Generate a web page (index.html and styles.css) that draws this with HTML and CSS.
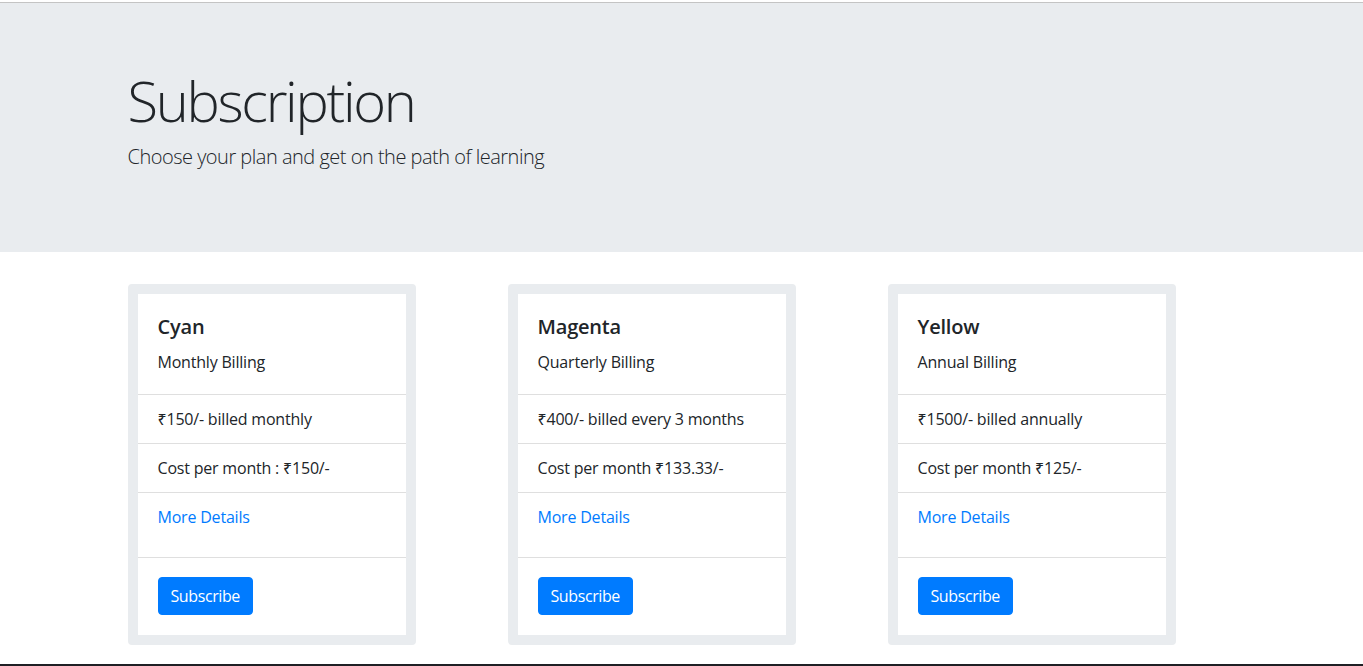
FILE: index.html
```html
<!DOCTYPE html>
<html lang="en">
<head>
<meta charset="utf-8">
<title>Subscription</title>
<link rel="stylesheet" href="styles.css">
</head>
<body>
<div class="topline"></div>
<header class="jumbotron">
  <div class="container">
    <h1 class="display">Subscription</h1>
    <p class="lead">Choose your plan and get on the path of learning</p>
  </div>
</header>
<main class="container">
  <div class="row">
    <div class="col">
      <div class="card">
        <div class="card-body">
          <h5 class="card-title">Cyan</h5>
          <p class="card-text">Monthly Billing</p>
        </div>
        <ul class="list-group">
          <li class="list-item">₹150/- billed monthly</li>
          <li class="list-item">Cost per month : ₹150/-</li>
        </ul>
        <div class="card-links"><a href="#" class="card-link">More Details</a></div>
        <div class="card-footer"><button class="btn">Subscribe</button></div>
      </div>
    </div>
    <div class="col">
      <div class="card">
        <div class="card-body">
          <h5 class="card-title">Magenta</h5>
          <p class="card-text">Quarterly Billing</p>
        </div>
        <ul class="list-group">
          <li class="list-item">₹400/- billed every 3 months</li>
          <li class="list-item">Cost per month ₹133.33/-</li>
        </ul>
        <div class="card-links"><a href="#" class="card-link">More Details</a></div>
        <div class="card-footer"><button class="btn">Subscribe</button></div>
      </div>
    </div>
    <div class="col">
      <div class="card">
        <div class="card-body">
          <h5 class="card-title">Yellow</h5>
          <p class="card-text">Annual Billing</p>
        </div>
        <ul class="list-group">
          <li class="list-item">₹1500/- billed annually</li>
          <li class="list-item">Cost per month ₹125/-</li>
        </ul>
        <div class="card-links"><a href="#" class="card-link">More Details</a></div>
        <div class="card-footer"><button class="btn">Subscribe</button></div>
      </div>
    </div>
  </div>
</main>
<div class="taskbar"></div>
</body>
</html>
```
FILE: styles.css
```css
* { box-sizing: border-box; }
html, body { margin: 0; padding: 0; }
body {
  font-family: "Open Sans", "Noto Sans", "DejaVu Sans", sans-serif;
  font-size: 16px;
  line-height: 1.5;
  color: #212529;
  background: #fff;
  letter-spacing: -0.2px;
}
.topline {
  height: 3px;
  border-bottom: 1px solid #c4c4c4;
}
.container {
  width: 1140px;
  margin: 0 auto;
  padding: 0 15px 0 16px;
}
.jumbotron {
  background: #e9ecef;
  padding: 64px 0;
  margin-bottom: 32px;
}
.display {
  font-size: 56px;
  font-weight: 300;
  line-height: 1.2;
  margin: 0 0 8px;
  letter-spacing: -2.3px;
}
.lead {
  font-size: 20px;
  font-weight: 300;
  line-height: 1.5;
  margin: 0 0 16px;
  letter-spacing: -0.5px;
}
.row {
  display: flex;
  margin: 0 -15px;
}
.col {
  flex: 0 0 380px;
  padding: 0 15px;
}
.card {
  width: 288px;
  border: 10px solid #e9ecef;
  border-radius: 4px;
  background: #fff;
  display: flex;
  flex-direction: column;
}
.card-body {
  padding: 20px;
}
.card-title {
  font-size: 20px;
  font-weight: 600;
  line-height: 1.2;
  margin: 1px 0 11px;
}
.card-text {
  margin: 0;
}
.list-group {
  list-style: none;
  margin: 0;
  padding: 0;
  border-top: 1px solid #dfdfdf;
}
.list-item {
  padding: 12px 20px;
  border-bottom: 1px solid #dfdfdf;
}
.card-links {
  padding: 12px 20px 28px;
  border-bottom: 1px solid #dfdfdf;
}
.card-link {
  color: #007bff;
  text-decoration: none;
}
.card-footer {
  padding: 19px 20px 20px;
}
.btn {
  font-family: inherit;
  font-size: 16px;
  line-height: 1.5;
  letter-spacing: -0.4px;
  color: #fff;
  background: #007bff;
  border: 1px solid #007bff;
  border-radius: 4px;
  padding: 6px 12px;
  cursor: pointer;
}
.taskbar {
  position: fixed;
  left: 0;
  right: 0;
  bottom: 0;
  height: 2px;
  background: #1f1f24;
}
```
